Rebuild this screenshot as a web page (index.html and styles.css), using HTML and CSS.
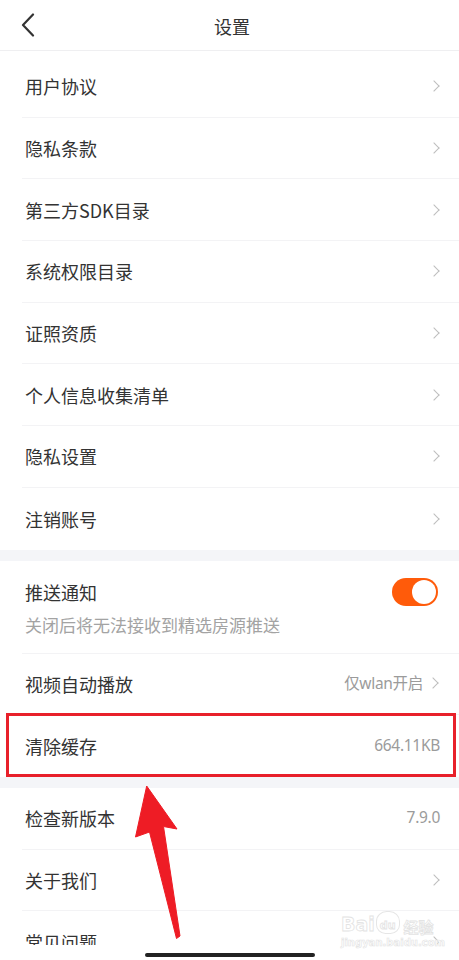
FILE: index.html
```html
<!DOCTYPE html>
<html lang="zh-CN">
<head>
<meta charset="utf-8">
<title>设置</title>
<link rel="stylesheet" href="styles.css">
</head>
<body>
<div class="screen">
  <header class="topbar">
    <svg class="back" width="14" height="24" viewBox="0 0 14 24"><path d="M12 1.5 L2 12 L12 22.5" fill="none" stroke="#333" stroke-width="2.2" stroke-linecap="round" stroke-linejoin="round"/></svg>
    <h1 class="title">设置</h1>
  </header>

  <div class="content">
    <section class="group first">
      <div class="row"><span class="label">用户协议</span><span class="chev"></span></div>
      <div class="row"><span class="label">隐私条款</span><span class="chev"></span></div>
      <div class="row"><span class="label">第三方SDK目录</span><span class="chev"></span></div>
      <div class="row"><span class="label">系统权限目录</span><span class="chev"></span></div>
      <div class="row"><span class="label">证照资质</span><span class="chev"></span></div>
      <div class="row"><span class="label">个人信息收集清单</span><span class="chev"></span></div>
      <div class="row"><span class="label">隐私设置</span><span class="chev"></span></div>
      <div class="row"><span class="label">注销账号</span><span class="chev"></span></div>
    </section>

    <div class="gap g1"></div>

    <section class="group">
      <div class="row tall">
        <div class="stack">
          <span class="label">推送通知</span>
          <span class="sub">关闭后将无法接收到精选房源推送</span>
        </div>
        <span class="switch"><span class="knob"></span></span>
      </div>
      <div class="row"><span class="label">视频自动播放</span><span class="value">仅wlan开启<span class="chev inline"></span></span></div>
      <div class="row"><span class="label">清除缓存</span><span class="value">664.11KB</span></div>
    </section>

    <div class="gap g2"></div>

    <section class="group">
      <div class="row"><span class="label">检查新版本</span><span class="value">7.9.0</span></div>
      <div class="row"><span class="label">关于我们</span><span class="chev"></span></div>
      <div class="row"><span class="label">常见问题</span><span class="chev"></span></div>
    </section>
  </div>

  <div class="homebar"><span class="indicator"></span></div>

  <div class="highlight"></div>

  <svg class="arrow" width="459" height="960" viewBox="0 0 459 960">
    <polygon points="146.7,786 177,829 163.5,826.5 180,936 176.5,938.5 149.5,832 135.5,837" fill="#ee1c25" stroke="#ee1c25" stroke-width="1" stroke-linejoin="round"/>
  </svg>

  <div class="watermark">
    <div class="wm-top"><span class="wm-bai">Bai</span><span class="wm-paw">du</span><span class="wm-jy">经验</span></div>
    <div class="wm-url">jingyan.baidu.com</div>
  </div>
</div>
</body>
</html>
```

FILE: styles.css
```css
* { box-sizing: border-box; margin: 0; padding: 0; }

html, body {
  width: 459px;
  height: 960px;
  background: #fff;
  overflow: hidden;
}

body {
  font-family: "Noto Sans CJK SC", "Noto Sans", sans-serif;
  color: #333;
}

.screen {
  position: relative;
  width: 459px;
  height: 960px;
  display: flex;
  flex-direction: column;
  overflow: hidden;
}

.topbar {
  height: 51px;
  flex: none;
  display: flex;
  align-items: center;
  justify-content: center;
  padding-left: 5px;
  border-bottom: 1px solid #efeff1;
  position: relative;
}

.back {
  position: absolute;
  left: 21px;
  top: 13px;
}

.title {
  font-size: 18px;
  font-weight: 400;
  color: #333;
  line-height: 1;
  margin-top: 1px;
}

.content {
  flex: 1;
  min-height: 0;
  overflow: hidden;
}

.group.first { padding-top: 5px; }

.row {
  height: 61.7px;
  margin-left: 22px;
  padding-left: 3px;
  padding-right: 19px;
  display: flex;
  align-items: center;
  justify-content: space-between;
  border-bottom: 1px solid #f3f3f5;
}

.group .row:last-child { border-bottom: none; }

.row.tall { height: 93px; padding-top: 2px; }

.label {
  font-size: 18px;
  line-height: 1;
  color: #333;
}

.stack {
  display: flex;
  flex-direction: column;
  gap: 15px;
}

.sub {
  font-size: 17px;
  line-height: 1;
  color: #a3a3a3;
}

.chev {
  width: 8px;
  height: 8px;
  border-top: 1.3px solid #bdbdbd;
  border-right: 1.3px solid #bdbdbd;
  transform: rotate(45deg);
  margin-right: 2px;
}

.chev.inline {
  display: inline-block;
  margin-left: 6px;
  margin-right: 3px;
  vertical-align: 2px;
}

.value {
  font-family: "Noto Sans", "Noto Sans CJK SC", sans-serif;
  font-size: 15.5px;
  color: #9b9b9b;
  line-height: 1;
  letter-spacing: -0.3px;
}

.switch {
  width: 46px;
  height: 28px;
  border-radius: 14px;
  background: #ff5b0a;
  display: flex;
  align-items: center;
  justify-content: flex-end;
  padding-right: 2px;
  margin-right: 2px;
  margin-top: -32px;
}

.knob {
  width: 24px;
  height: 24px;
  border-radius: 50%;
  background: #fff;
}

.gap {
  background: #f4f5f8;
}
.g1 { height: 11px; }
.g2 { height: 11px; }

.homebar {
  height: 15px;
  flex: none;
  display: flex;
  justify-content: center;
  padding-top: 8px;
  background: #fff;
}

.indicator {
  width: 170px;
  height: 4px;
  border-radius: 2px;
  background: #222;
}

.highlight {
  position: absolute;
  left: 6px;
  top: 713px;
  width: 450px;
  height: 64px;
  border: 3px solid #e8202a;
}

.arrow {
  position: absolute;
  left: 0;
  top: 0;
  pointer-events: none;
}

.watermark {
  position: absolute;
  left: 341px;
  top: 906px;
  color: #fff;
  font-family: "DejaVu Sans", sans-serif;
  -webkit-text-stroke: 0.8px #e3e3e3;
}

.wm-top {
  display: flex;
  align-items: flex-end;
  gap: 1px;
  height: 28px;
}

.wm-bai {
  font-size: 19px;
  font-weight: 700;
  line-height: 1;
}

.wm-paw {
  font-size: 11px;
  font-weight: 700;
  line-height: 1;
  border: 1px solid #e6e6e6;
  border-radius: 45% 45% 40% 40%;
  padding: 8px 3px 2px;
}

.wm-jy {
  font-family: "Noto Sans CJK SC", sans-serif;
  font-size: 15px;
  font-weight: 700;
  line-height: 1;
  margin-left: 3px;
}

.wm-url {
  font-size: 10px;
  font-weight: 700;
  line-height: 1;
  margin-top: 4px;
  -webkit-text-stroke: 0.6px #e3e3e3;
}
```
